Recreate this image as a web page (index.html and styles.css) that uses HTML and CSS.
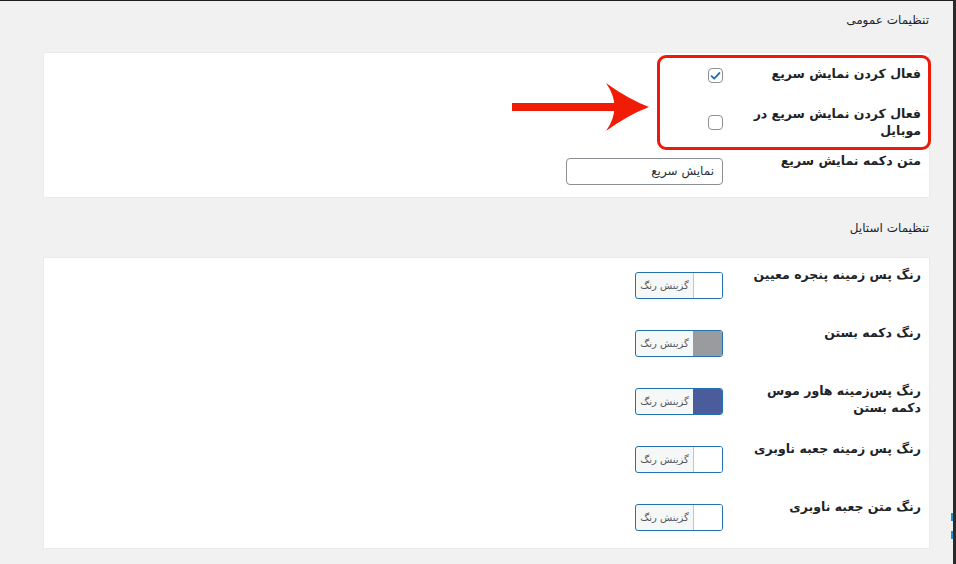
FILE: index.html
```html
<!DOCTYPE html>
<html lang="fa" dir="rtl">
<head>
<meta charset="utf-8">
<title>تنظیمات</title>
<link rel="stylesheet" href="styles.css">
</head>
<body>
<div class="page">
  <main class="main">
    <h2 class="section-title">تنظیمات عمومی</h2>
    <section class="card card-general">
      <div class="row row-1">
        <div class="label">فعال کردن نمایش سریع</div>
        <div class="field"><span class="checkbox checked"><svg viewBox="0 0 16 16" width="14" height="14"><path d="M3.2 8.2 L6.4 11.2 L12.8 4.4" fill="none" stroke="#2271b1" stroke-width="2.4" stroke-linecap="round" stroke-linejoin="round"/></svg></span></div>
      </div>
      <div class="row row-2">
        <div class="label">فعال کردن نمایش سریع در موبایل</div>
        <div class="field"><span class="checkbox"></span></div>
      </div>
      <div class="row row-3">
        <div class="label">متن دکمه نمایش سریع</div>
        <div class="field"><span class="text-input">نمایش سریع</span></div>
      </div>
    </section>

    <h2 class="section-title second">تنظیمات استایل</h2>
    <section class="card card-style">
      <div class="crow">
        <div class="label">رنگ پس زمینه پنجره معیین</div>
        <div class="field"><span class="color-btn"><span class="swatch"></span><span class="btn-text">گزینش رنگ</span></span></div>
      </div>
      <div class="crow">
        <div class="label">رنگ دکمه بستن</div>
        <div class="field"><span class="color-btn"><span class="swatch swatch-gray"></span><span class="btn-text">گزینش رنگ</span></span></div>
      </div>
      <div class="crow">
        <div class="label">رنگ پس‌زمینه هاور موس دکمه بستن</div>
        <div class="field"><span class="color-btn"><span class="swatch swatch-blue"></span><span class="btn-text">گزینش رنگ</span></span></div>
      </div>
      <div class="crow">
        <div class="label">رنگ پس زمینه جعبه ناوبری</div>
        <div class="field"><span class="color-btn"><span class="swatch"></span><span class="btn-text">گزینش رنگ</span></span></div>
      </div>
      <div class="crow">
        <div class="label">رنگ متن جعبه ناوبری</div>
        <div class="field"><span class="color-btn"><span class="swatch"></span><span class="btn-text">گزینش رنگ</span></span></div>
      </div>
    </section>
  </main>

  <div class="highlight-box"></div>
  <svg class="arrow" viewBox="500 75 160 65" width="160" height="65">
    <rect x="512" y="103" width="104" height="8" fill="#f01c05"/>
    <path d="M606 83 Q628 99 649 107 Q628 115 606 131 Q623 107 606 83 Z" fill="#f01c05"/>
  </svg>
  <span class="edge-mark edge-mark-1"></span>
  <span class="edge-mark edge-mark-2"></span>
</div>
</body>
</html>
```

FILE: styles.css
```css
html, body {
  margin: 0;
  padding: 0;
}

body {
  font-family: "DejaVu Sans", "Noto Sans", sans-serif;
  color: #1d2327;
  background: #f1f1f1;
}

.page {
  position: relative;
  box-sizing: border-box;
  width: 956px;
  height: 564px;
  overflow: hidden;
  background: #f1f1f1;
  border-top: 1px solid #1e1e1e;
  border-right: 3px solid #2a2a2a;
}

.main {
  padding: 9px 24px 0 44px;
}

.section-title {
  margin: 0 0 23px 0;
  font-size: 12px;
  line-height: 20px;
  font-weight: normal;
  color: #1d2327;
}

.section-title.second {
  margin: 21px 0 20px 0;
}

.card {
  background: #fff;
  box-shadow: 0 0 0 1px #ebebeb;
  padding: 0 8px 0 0;
}

.card-general {
  padding-top: 11px;
  padding-bottom: 12px;
}

.row, .crow {
  display: grid;
  grid-template-columns: 180px 1fr;
  column-gap: 18px;
  align-items: start;
}

.label {
  font-size: 12.5px;
  font-weight: bold;
  line-height: 17px;
  color: #1d2327;
}

.row-1 .label { padding-top: 1px; }
.row-1 .field { padding-top: 4px; }
.row-2 { margin-top: 22px; }
.row-2 .field { padding-top: 10px; }
.row-3 { margin-top: 13px; }
.row-3 .field { padding-top: 6px; }

.field {
  display: flex;
}

.checkbox {
  box-sizing: border-box;
  width: 15px;
  height: 15px;
  border: 1px solid #8c8f94;
  border-radius: 4px;
  background: #fff;
  display: flex;
  align-items: center;
  justify-content: center;
}

.text-input {
  box-sizing: border-box;
  width: 157px;
  height: 27px;
  border: 1px solid #8c8f94;
  border-radius: 4px;
  padding: 0 8px;
  font-size: 12px;
  line-height: 25px;
  color: #2c3338;
}

.card-style {
  display: grid;
  grid-template-rows: repeat(4, 58px) 50px;
  padding-top: 8px;
}

.crow .field {
  padding-top: 6px;
}

.color-btn {
  box-sizing: border-box;
  display: flex;
  width: 88px;
  height: 27px;
  border: 1px solid #2271b1;
  border-radius: 3px;
  overflow: hidden;
  background: #f6f7f7;
}

.swatch {
  width: 28px;
  background: #fff;
  border-left: 1px solid #c3c4c7;
}

.swatch-gray {
  background: #9a9b9f;
  border-left-color: #9a9b9f;
}

.swatch-blue {
  background: #4a5c9c;
  border-left-color: #4a5c9c;
}

.btn-text {
  flex: 1;
  text-align: center;
  font-size: 10px;
  line-height: 25px;
  color: #50575e;
}

.highlight-box {
  position: absolute;
  left: 657px;
  top: 54px;
  width: 274px;
  height: 95px;
  box-sizing: border-box;
  border: 3px solid #ec1a0a;
  border-radius: 9px;
}

.arrow {
  position: absolute;
  left: 500px;
  top: 74px;
}

.edge-mark {
  position: absolute;
  right: 0;
  width: 2px;
  height: 8px;
  background: #2c8fc9;
}

.edge-mark-1 { top: 512px; }
.edge-mark-2 { top: 530px; }
```
